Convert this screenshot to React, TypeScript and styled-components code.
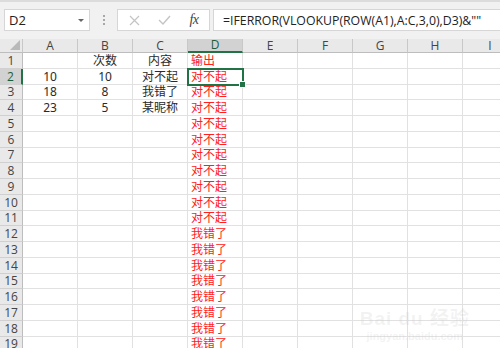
import React from "react";
import styled, { createGlobalStyle } from "styled-components";

const GlobalStyle = createGlobalStyle`
  html, body {
    margin: 0;
    padding: 0;
    background: #ffffff;
  }
  body {
    font-family: "Open Sans", "Noto Sans CJK SC", sans-serif;
  }
`;

const GREEN = "#217346";
const CJK = `"Noto Sans", "Noto Sans CJK SC", sans-serif`;

const Page = styled.div`
  position: relative;
  width: 500px;
  height: 348px;
  overflow: hidden;
  background: #ffffff;
`;

const FormulaBar = styled.div`
  height: 39px;
  box-sizing: border-box;
  border-top: 2px solid #dcdcdc;
  background: #f1f1f1;
  display: flex;
  align-items: flex-start;
  padding: 7px 0 0 4px;
`;

const NameBox = styled.div`
  width: 86px;
  height: 22px;
  box-sizing: border-box;
  background: #ffffff;
  border: 1px solid #d6d6d6;
  display: flex;
  align-items: center;
  justify-content: space-between;
  padding: 0 5px 0 4px;
  font-family: "Open Sans", sans-serif;
  font-size: 13px;
  color: #222;
`;

const Caret = styled.span`
  width: 0;
  height: 0;
  border-left: 3px solid transparent;
  border-right: 3px solid transparent;
  border-top: 3px solid #666;
`;

const Grip = styled.div`
  width: 27px;
  height: 22px;
  display: flex;
  flex-direction: column;
  align-items: center;
  justify-content: center;
  gap: 2px;

  span {
    width: 2px;
    height: 2px;
    background: #a8a8a8;
  }
`;

const ActionBox = styled.div`
  width: 93px;
  height: 22px;
  box-sizing: border-box;
  background: #ffffff;
  border: 1px solid #d6d6d6;
  display: grid;
  grid-template-columns: 32px 29px 30px;
  align-items: center;
  justify-items: center;
`;

const FxLabel = styled.span`
  font-family: "Liberation Serif", serif;
  font-style: italic;
  font-size: 14px;
  color: #444;
  letter-spacing: -0.5px;
`;

const FormulaInput = styled.div`
  flex: 1;
  margin-left: 3px;
  height: 22px;
  box-sizing: border-box;
  background: #ffffff;
  border: 1px solid #d6d6d6;
  border-right: none;
  display: flex;
  align-items: center;
  padding-left: 9px;
  font-family: "Open Sans", sans-serif;
  font-size: 12.3px;
  color: #222;
  white-space: nowrap;
`;

const Sheet = styled.div`
  display: grid;
  grid-template-columns: 23px repeat(9, 55px);
  grid-template-rows: 14px;
  grid-auto-rows: 15.75px;
  width: 520px;
`;

const HeaderCell = styled.div<{ $selected?: boolean }>`
  box-sizing: border-box;
  background: ${(p) => (p.$selected ? "#d2d2d2" : "#e9e9e9")};
  border-right: 1px solid #c8c8c8;
  border-bottom: ${(p) =>
    p.$selected ? `2px solid ${GREEN}` : "1px solid #bdbdbd"};
  display: flex;
  align-items: center;
  justify-content: center;
  font-family: "Open Sans", sans-serif;
  font-size: 12px;
  color: ${(p) => (p.$selected ? "#1d5e3a" : "#444")};
  line-height: 1;
`;

const Corner = styled.div`
  box-sizing: border-box;
  background: #e9e9e9;
  border-right: 1px solid #c8c8c8;
  border-bottom: 1px solid #bdbdbd;
  display: flex;
  align-items: flex-end;
  justify-content: flex-end;
  padding: 0 2px 2px 0;
`;

const RowHead = styled.div<{ $selected?: boolean }>`
  box-sizing: border-box;
  background: ${(p) => (p.$selected ? "#d2d2d2" : "#e9e9e9")};
  border-right: ${(p) =>
    p.$selected ? `2px solid ${GREEN}` : "1px solid #bdbdbd"};
  border-bottom: 1px solid #d0d0d0;
  display: flex;
  align-items: flex-end;
  justify-content: center;
  padding-bottom: 1px;
  font-family: "Open Sans", sans-serif;
  font-size: 12px;
  line-height: 1;
  color: ${(p) => (p.$selected ? "#1d5e3a" : "#444")};
`;

const Cell = styled.div<{
  $align?: "left" | "center";
  $red?: boolean;
  $active?: boolean;
}>`
  position: relative;
  box-sizing: border-box;
  border-right: 1px solid #e1e1e1;
  border-bottom: 1px solid #e1e1e1;
  display: flex;
  align-items: flex-end;
  padding-bottom: 1px;
  justify-content: ${(p) => (p.$align === "left" ? "flex-start" : "center")};
  padding-left: ${(p) => (p.$align === "left" ? "3px" : "0")};
  font-family: ${CJK};
  font-size: 12px;
  line-height: 1;
  color: ${(p) => (p.$red ? "#ff2020" : "#2a2a2a")};
  white-space: nowrap;
  ${(p) =>
    p.$active &&
    `
    outline: 2px solid ${GREEN};
    outline-offset: -1px;
    z-index: 2;
    &::after {
      content: "";
      position: absolute;
      right: -4px;
      bottom: -4px;
      width: 5px;
      height: 5px;
      background: ${GREEN};
      border: 1px solid #fff;
    }
  `}
`;

const Watermark = styled.div`
  position: absolute;
  right: 30px;
  bottom: 6px;
  display: flex;
  flex-direction: column;
  align-items: center;
  color: rgba(200, 200, 200, 0.22);
  font-family: "Liberation Sans", sans-serif;
  pointer-events: none;
`;

const MarkTitle = styled.span`
  font-size: 19px;
  font-weight: bold;
  letter-spacing: 1px;
  font-family: "Liberation Sans", "Noto Sans CJK SC", sans-serif;
`;

const MarkUrl = styled.span`
  font-size: 11px;
  font-weight: bold;
`;

const COLS = ["A", "B", "C", "D", "E", "F", "G", "H", "I"];

type Row = { a?: string; b?: string; c?: string; d?: string };

const rows: Row[] = [
  { b: "次数", c: "内容", d: "输出" },
  { a: "10", b: "10", c: "对不起", d: "对不起" },
  { a: "18", b: "8", c: "我错了", d: "对不起" },
  { a: "23", b: "5", c: "某昵称", d: "对不起" },
  ...Array.from({ length: 7 }, () => ({ d: "对不起" })),
  ...Array.from({ length: 9 }, () => ({ d: "我错了" })),
];

export default function App() {
  return (
    <Page>
      <GlobalStyle />
      <FormulaBar>
        <NameBox>
          D2
          <Caret />
        </NameBox>
        <Grip>
          <span />
          <span />
          <span />
        </Grip>
        <ActionBox>
          <svg width="11" height="11" viewBox="0 0 11 11">
            <path d="M1 1 L10 10 M10 1 L1 10" stroke="#c4c4c4" strokeWidth="1.2" />
          </svg>
          <svg width="13" height="10" viewBox="0 0 13 10">
            <path d="M1 5 L5 9 L12 1" stroke="#c4c4c4" strokeWidth="1.4" fill="none" />
          </svg>
          <FxLabel>fx</FxLabel>
        </ActionBox>
        <FormulaInput>=IFERROR(VLOOKUP(ROW(A1),A:C,3,0),D3)&amp;""</FormulaInput>
      </FormulaBar>

      <Sheet>
        <Corner>
          <svg width="10" height="10" viewBox="0 0 10 10">
            <path d="M10 0 L10 10 L0 10 Z" fill="#b9b9b9" />
          </svg>
        </Corner>
        {COLS.map((c) => (
          <HeaderCell key={c} $selected={c === "D"}>
            {c}
          </HeaderCell>
        ))}
        {rows.map((r, i) => (
          <React.Fragment key={i}>
            <RowHead $selected={i === 1}>{i + 1}</RowHead>
            <Cell>{r.a}</Cell>
            <Cell>{r.b}</Cell>
            <Cell>{r.c}</Cell>
            <Cell $align="left" $red $active={i === 1}>
              {r.d}
            </Cell>
            {COLS.slice(4).map((c) => (
              <Cell key={c} />
            ))}
          </React.Fragment>
        ))}
      </Sheet>

      <Watermark>
        <MarkTitle>Bai du 经验</MarkTitle>
        <MarkUrl>jingyan.baidu.com</MarkUrl>
      </Watermark>
    </Page>
  );
}
